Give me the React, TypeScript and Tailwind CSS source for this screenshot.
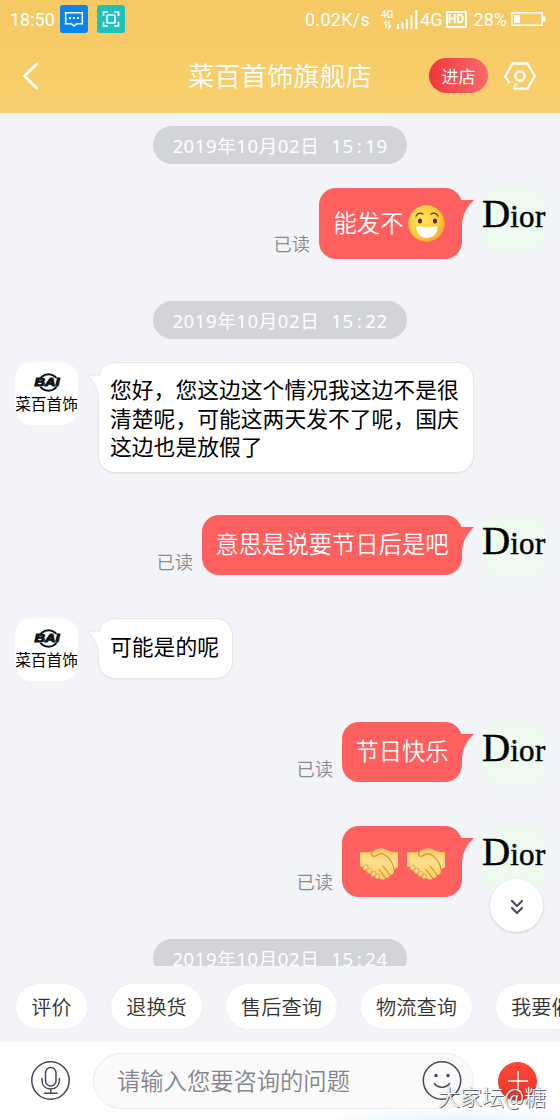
import type { ReactNode } from 'react';
import { ChevronsDown } from 'lucide-react';

const QUICK_REPLIES = [
  { label: '评价', width: 'w-[71px]' },
  { label: '退换货', width: 'w-[91px]' },
  { label: '售后查询', width: 'w-[111px]' },
  { label: '物流查询', width: 'w-[111px]' },
  { label: '我要催单', width: 'w-[111px]' },
];

function StatusBar() {
  return (
    <div className="flex h-[38px] items-center pl-[10px] pr-[14px] font-['Roboto',sans-serif] text-[18px] text-white">
      <span className="w-[45px] whitespace-nowrap">18:50</span>
      <svg className="ml-[5px] h-7 w-7" viewBox="0 0 28 28">
        <rect width="28" height="28" rx="3" fill="#0a84f0" />
        <path d="M5.7 7.7h16.6v11h-5.6L14 21l-2.7-2.3H5.7z" fill="none" stroke="#fff" strokeWidth="1.6" />
        <path d="M9 12h2v2H9zM13 12h2v2h-2zM17 12h2v2h-2z" fill="#fff" />
      </svg>
      <svg className="ml-[9px] h-7 w-7" viewBox="0 0 28 28">
        <rect width="28" height="28" rx="3" fill="#20c1bd" />
        <path d="M6.500 11V7H11M17 7h4.500v4M21.500 17v4H17M11 21H6.500v-4" fill="none" stroke="#fff" strokeWidth="1.7" />
        <rect x="10" y="10" width="8" height="8" rx="1" fill="none" stroke="#fff" strokeWidth="1.7" />
      </svg>
      <span className="ml-auto whitespace-nowrap tracking-[0.300px]">0.02K/s</span>
      <div className="ml-[10px] flex w-[14px] flex-col items-center">
        <span className="text-[10px] font-medium leading-[10px]">4G</span>
        <svg className="h-[9px] w-[9px]" viewBox="0 0 9 9" fill="none" stroke="#fff" strokeWidth="1.3">
          <path d="M3 8V1L.8 3.5M6 1v7l2.2-2.5" />
        </svg>
      </div>
      <svg className="ml-[3px] h-[19px] w-[21px]" viewBox="0 0 21 19" fill="#fff">
        <path d="M0 14h2v5H0zM4.500 12h2v7h-2zM9 9h2v10H9zM13.500 5h2v14h-2zM18 0h2.400v19H18z" />
      </svg>
      <span className="ml-[2px]">4G</span>
      <span className="ml-[3px] flex h-[17px] w-[21px] items-center justify-center border-2 border-white text-[12px] font-bold leading-none">
        HD
      </span>
      <span className="ml-[7px]">28%</span>
      <svg className="ml-1 h-[14px] w-[35px]" viewBox="0 0 35 14">
        <rect x=".8" y=".8" width="30.400" height="12.400" fill="none" stroke="#fff" strokeWidth="1.5" />
        <path d="M3 3h6v8H3zM32 4.500h2.500v5H32z" fill="#fff" />
      </svg>
    </div>
  );
}

function Header() {
  return (
    <header className="h-[113px] shrink-0 bg-linear-to-b from-[#f5c963] to-[#f9d06e]">
      <StatusBar />
      <div className="flex h-[75px] items-center pl-[22px] pr-[24px]">
        <svg className="h-[30px] w-[18px]" viewBox="0 0 18 30" fill="none" stroke="#fff" strokeWidth="2.600">
          <path d="M15.500 2 2.500 15l13 13" />
        </svg>
        <h1 className="ml-[148px] whitespace-nowrap text-[26.300px] font-[350] leading-none text-white">菜百首饰旗舰店</h1>
        <button className="ml-auto h-[35px] w-[59px] rounded-full bg-linear-to-r from-[#f0343b] to-[#f76a6c] text-[17px] leading-none text-white">
          进店
        </button>
        <svg className="ml-[16px] h-[28px] w-[32px]" viewBox="0 0 32 28" fill="none" stroke="#fff" strokeWidth="2.300">
          <path d="M5.500 21 1.300 14.500 8.500 1.500h15L30.700 14l-7.200 12.700H10.200v-1.500L12.500 21" strokeLinejoin="round" />
          <circle cx="16" cy="14" r="4.700" />
        </svg>
      </div>
    </header>
  );
}

function TimePill({ date, hour, minute, className }: { date: string; hour: string; minute: string; className: string }) {
  return (
    <div
      className={`mx-auto flex h-[38px] w-[254px] shrink-0 items-center justify-center rounded-full bg-[#d3d4da] pt-px font-['Noto_Sans','Noto_Sans_CJK_SC',sans-serif] text-[18.600px] tracking-[0.550px] text-white ${className}`}
    >
      <span className="whitespace-nowrap">{date}</span>
      <span className="ml-[12px]">{hour}</span>
      <span className="px-[3px]">:</span>
      <span>{minute}</span>
    </div>
  );
}

function DiorAvatar() {
  return (
    <div className="ml-[20px] h-[63px] w-[63px] shrink-0 rounded-[16px] bg-[#eefaf0] pt-[6px]">
      <div className="flex items-baseline whitespace-nowrap font-['Liberation_Serif',serif] leading-[40px] text-black [-webkit-text-stroke:0.500px_#000]">
        <span className="text-[39px]">D</span>
        <span className="text-[31px] tracking-[0.300px]">ior</span>
      </div>
    </div>
  );
}

function ShopAvatar() {
  return (
    <div className="flex h-[63px] w-[63px] shrink-0 flex-col items-center overflow-hidden rounded-[16px] bg-white pt-[10px]">
      <svg className="h-[21px] w-[30px]" viewBox="0 0 30 21">
        <ellipse cx="16.500" cy="10.500" rx="9.500" ry="8.300" fill="none" stroke="#111" strokeWidth="2" />
        <path d="M2 6.200h27v8.600H1z" fill="#fff" />
        <text
          x="2.500"
          y="14"
          fontFamily="Liberation Sans, sans-serif"
          fontWeight="bold"
          fontStyle="italic"
          fontSize="10"
          textLength="25"
          lengthAdjust="spacingAndGlyphs"
          stroke="#111"
          strokeWidth=".9"
          fill="#111"
        >
          BAI
        </text>
      </svg>
      <span className="mt-[3px] whitespace-nowrap text-[15.700px] leading-[16px] text-black">菜百首饰</span>
    </div>
  );
}

type MessageProps = { children: ReactNode; className: string; bubble: string };

function SentMessage({ children, className, bubble }: MessageProps) {
  return (
    <div className={`flex shrink-0 items-end justify-end pr-[15px] ${className}`}>
      <span className="mr-[9px] text-[18.300px] font-[350] leading-[20px] text-[#8a8b8f]">已读</span>
      <div
        className={`relative flex items-center justify-center self-start whitespace-nowrap rounded-[17px] bg-[#fe6060] text-[23.300px] font-[350] leading-none text-white ${bubble}`}
      >
        {children}
        <svg className="absolute -right-3 top-[12px] h-[26px] w-[16px]" viewBox="0 0 16 26" fill="#fe6060">
          <path d="M0 0h16C9.500 6.500 4.500 13 4 26L0 20z" />
        </svg>
      </div>
      <div className="self-start">
        <DiorAvatar />
      </div>
    </div>
  );
}

function ReceivedMessage({ children, className, bubble }: MessageProps) {
  return (
    <div className={`flex shrink-0 items-start pl-[15px] ${className}`}>
      <ShopAvatar />
      <div
        className={`relative ml-[20px] whitespace-nowrap rounded-[17px] border border-[#e4e5e9] bg-white pl-[11px] text-[21.800px] leading-[28.700px] text-black shadow-[0_1px_1px_rgba(0,0,0,0.04)] ${bubble}`}
      >
        <svg className="absolute -left-[13px] top-[11px] h-[24px] w-[18px]" viewBox="0 0 18 24">
          <path d="M17 1H1C8 7 11.500 14 12.500 23L18 20V1z" fill="#fff" />
          <path d="M15 1H1C8 7 11.500 14 12.500 23" fill="none" stroke="#e4e5e9" />
        </svg>
        <p className="relative">{children}</p>
      </div>
    </div>
  );
}

function GrinFace() {
  return (
    <svg className="ml-[5px] mt-[2px] h-[37px] w-[37px]" viewBox="0 0 37 37">
      <defs>
        <radialGradient id="grin" cx=".4" cy=".4" r=".65">
          <stop offset="0" stopColor="#ffe45c" />
          <stop offset=".7" stopColor="#fccb3a" />
          <stop offset="1" stopColor="#f3a62c" />
        </radialGradient>
      </defs>
      <circle cx="18.500" cy="18.500" r="18.200" fill="url(#grin)" />
      <path d="M8 11c1.500-2.800 4.500-3.500 7-2M23 9c2.500-1.500 5.500-.8 7 2" fill="none" stroke="#6b3513" strokeWidth="1.400" strokeLinecap="round" />
      <ellipse cx="12" cy="16" rx="2.100" ry="2.500" fill="#5f2015" />
      <ellipse cx="27" cy="16" rx="2.100" ry="2.500" fill="#5f2015" />
      <path d="M8.500 23c0-1.400 1-2 2.300-1.700 5.800 1.400 11 1.400 16.500 0 1.500-.3 2.400.5 2.200 1.900-.6 5.500-4.600 9.800-10.500 9.800S9 28.800 8.500 23z" fill="#fff" />
    </svg>
  );
}

function Handshake() {
  return (
    <svg className="h-[34px] w-[40px]" viewBox="0 0 40 34">
      <defs>
        <linearGradient id="skin" x1="0" y1="0" x2="0" y2="1">
          <stop offset="0" stopColor="#fbc55c" />
          <stop offset=".4" stopColor="#ffe08a" />
          <stop offset="1" stopColor="#ffcf6a" />
        </linearGradient>
      </defs>
      <path
        d="M1 5c5 .8 10 .2 14-1.200C18 1.200 24 .5 29 3.500c3.500 1.500 6.500 2 10 1.500v15.500c-2 .2-3.400 1.500-4.200 3.200.2 2.800-1.300 4.300-3.800 4.300-.5 2.300-2.300 3.500-4.500 3-1.500 2-4 2-6 0-1.500 1.300-3.800.8-4.300-1L5 22C4 20 2.500 19.500 1 19.500z"
        fill="url(#skin)"
      />
      <path
        d="M14 4c-2 1.800-2 4-.5 5 3.500 1.200 5.500-2.500 9-2.500 4 1 7.500 4.500 10 8.500 1.500 2.500 2.500 5 2.300 8M20 22.500l6.500 8.500M24 19l7 9"
        fill="none"
        stroke="#d48b38"
        strokeWidth="1.100"
        strokeLinecap="round"
      />
      <g fill="#ffe08a" stroke="#df9b41" strokeWidth=".8">
        <ellipse cx="6.500" cy="20.500" rx="2.100" ry="2.800" transform="rotate(40 6.500 20.500)" />
        <ellipse cx="10.500" cy="23.800" rx="2.100" ry="2.800" transform="rotate(40 10.500 23.800)" />
        <ellipse cx="14.500" cy="27" rx="2.100" ry="2.800" transform="rotate(40 14.500 27)" />
        <ellipse cx="18.300" cy="29.500" rx="1.900" ry="2.500" transform="rotate(40 18.300 29.500)" />
      </g>
    </svg>
  );
}

function QuickReplies() {
  return (
    <div className="flex h-[76px] shrink-0 gap-6 overflow-hidden pl-[16px] pt-[18px]">
      {QUICK_REPLIES.map(({ label, width }) => (
        <button
          key={label}
          className={`h-[45px] shrink-0 whitespace-nowrap rounded-full bg-white pt-px text-[20.200px] font-[350] leading-none text-[#333] shadow-[0_0_2px_rgba(0,0,0,0.06)] ${width}`}
        >
          {label}
        </button>
      ))}
    </div>
  );
}

function InputBar() {
  return (
    <footer className="flex h-[78px] shrink-0 items-center bg-white bg-[radial-gradient(ellipse_150px_12px_at_460px_78px,#e4f3fc,transparent)] pl-[31px] pr-[23px]">
      <svg className="h-10 w-10 shrink-0" viewBox="0 0 40 40" fill="none" stroke="#44475a" strokeWidth="1.500">
        <circle cx="19.500" cy="19.500" r="18.700" />
        <rect x="14.500" y="6.500" width="10.500" height="18.500" rx="5.200" />
        <path d="M11 17.500v1.500c0 5.500 3.500 9 8.700 9s8.700-3.500 8.700-9v-1.500M19.700 28v4M13.500 32.300h12.500" strokeLinecap="round" />
      </svg>
      <div className="ml-[22px] flex h-[56px] w-[381px] shrink-0 items-center justify-between rounded-full border border-[#ececee] bg-[#fafafa] pl-[23px] pr-[11px]">
        <span className="text-[23.300px] font-[350] leading-none text-[#858589]">请输入您要咨询的问题</span>
        <svg className="h-10 w-10" viewBox="0 0 40 40" fill="none" stroke="#44475a" strokeWidth="1.500">
          <circle cx="20" cy="19.500" r="18.700" />
          <path d="M12.500 22.500c3.500 5 11.500 5 15 0" strokeLinecap="round" />
          <circle cx="14" cy="14.500" r="1" fill="#44475a" />
          <circle cx="26" cy="14.500" r="1" fill="#44475a" />
        </svg>
      </div>
      <div className="ml-[24px] flex h-[39px] w-[39px] shrink-0 items-center justify-center rounded-full bg-linear-to-b from-[#fa4a3a] to-[#f22d22]">
        <svg className="h-[22px] w-[22px]" viewBox="0 0 22 22" stroke="#fff" strokeWidth="1.500">
          <path d="M11 1v20M1 11h20" />
        </svg>
      </div>
    </footer>
  );
}

export default function App() {
  return (
    <div className="relative flex h-[1120px] w-[560px] flex-col overflow-hidden bg-[#f3f4f7] font-['Noto_Sans_CJK_SC',sans-serif]">
      <Header />

      <main className="flex h-[853px] shrink-0 flex-col overflow-hidden">
        <TimePill date="2019年10月02日" hour="15" minute="19" className="mt-[13px]" />
        <SentMessage className="mt-[24px] h-[71px] pb-[6px]" bubble="h-[71px] w-[143px] pb-[2px] pr-[2px]">
          能发不
          <GrinFace />
        </SentMessage>

        <TimePill date="2019年10月02日" hour="15" minute="22" className="mt-[42px]" />
        <ReceivedMessage className="mt-[23px] h-[111px]" bubble="h-[111px] w-[376px] pt-[12px]">
          您好，您这边这个情况我这边不是很
          <br />
          清楚呢，可能这两天发不了呢，国庆
          <br />
          这边也是放假了
        </ReceivedMessage>

        <SentMessage className="mt-[42px] h-[60px] pb-[4px]" bubble="h-[60px] w-[260px] pb-[2px]">
          意思是说要节日后是吧
        </SentMessage>
        <ReceivedMessage className="mt-[43px] h-[61px]" bubble="h-[61px] w-[135px] pt-[13px]">
          可能是的呢
        </ReceivedMessage>
        <SentMessage className="mt-[43px] h-[60px] pb-[4px]" bubble="h-[60px] w-[120px] pb-[2px]">
          节日快乐
        </SentMessage>
        <SentMessage className="mt-[44px] h-[71px] pb-[6px]" bubble="h-[71px] w-[120px] gap-[7px] pt-[4px]">
          <Handshake />
          <Handshake />
        </SentMessage>

        <TimePill date="2019年10月02日" hour="15" minute="24" className="mt-[42px]" />
      </main>

      <QuickReplies />
      <InputBar />

      {/* Jump to the latest message */}
      <button className="absolute left-[490px] top-[879px] flex h-[53px] w-[53px] items-center justify-center rounded-full bg-white pt-[2px] shadow-[0_1px_3px_rgba(0,0,0,0.16)]">
        <ChevronsDown size={24} strokeWidth={2.2} className="text-[#4a4d63]" />
      </button>

      {/* Watermark */}
      <span className="absolute left-[438px] top-[1081px] whitespace-nowrap text-[22px] font-light leading-[28px] text-white [text-shadow:1px_1px_0_#666,0_0_1px_#777]">
        大家坛@糖
      </span>
    </div>
  );
}
